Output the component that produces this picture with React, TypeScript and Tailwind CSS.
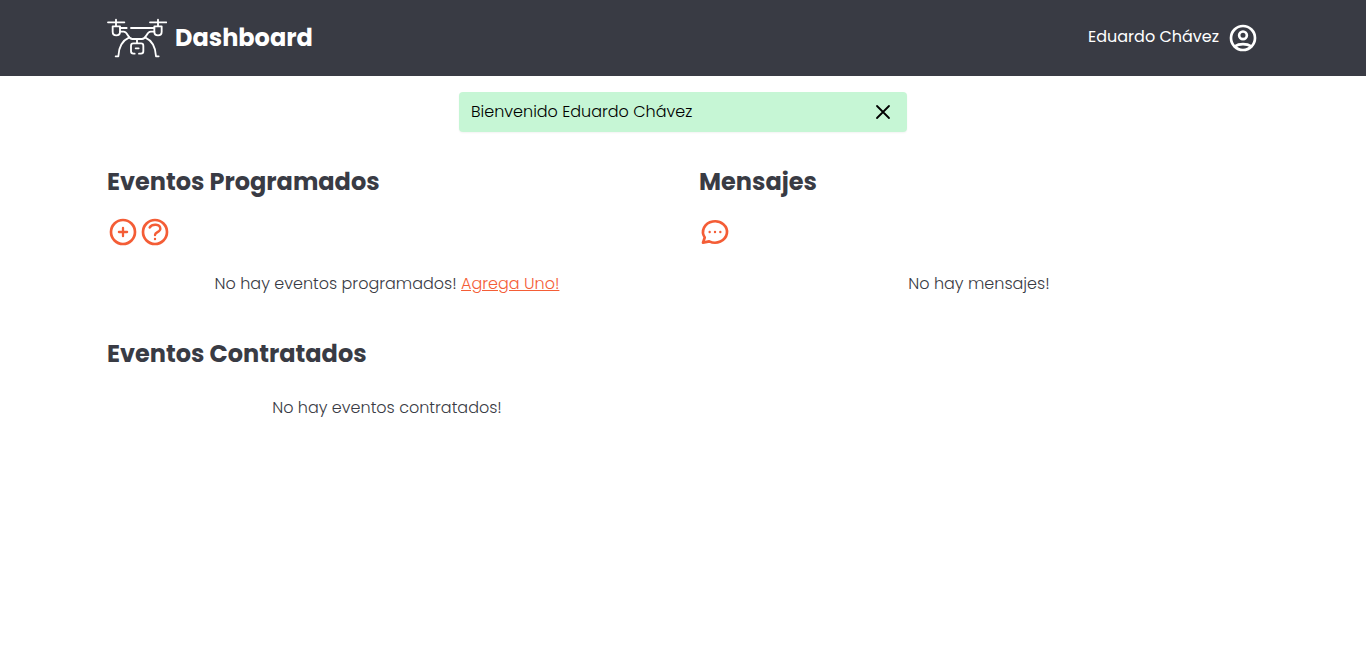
import { useState, type ReactNode } from 'react';

function Icon({ children }: { children: ReactNode }) {
  return (
    <svg
      viewBox="0 0 24 24"
      className="size-8"
      fill="none"
      stroke="currentColor"
      strokeWidth={2}
      strokeLinecap="round"
      strokeLinejoin="round"
      aria-hidden="true"
    >
      {children}
    </svg>
  );
}

function DroneLogo() {
  return (
    <svg
      viewBox="21 21 180 126"
      className="h-[42px] w-[60px]"
      fill="none"
      stroke="currentColor"
      strokeWidth={5.5}
      strokeLinecap="round"
      strokeLinejoin="round"
      aria-hidden="true"
    >
      <path d="M24 37H73M48 29V47M38 49H60V65Q60 76 49 76Q38 76 38 65Z" />
      <path d="M150 37H199M174 29V47M163 49H185V65Q185 76 174 76Q163 76 163 65Z" />
      <path d="M60 54H80M93 54H163" />
      <path d="M60 65H71C84 65 83 87 97 87H126C140 87 139 65 152 65H163" />
      <path d="M88 82C68 91 56 112 55 139H47M135 82C155 91 167 112 168 139H176" />
      <path d="M111 88V99M104 131H100Q93 131 93 124V107Q93 100 100 100H123Q130 100 130 107V124Q130 131 123 131H117M107 115H116" />
    </svg>
  );
}

export default function App() {
  const [showWelcome, setShowWelcome] = useState(true);

  return (
    <div className="min-h-screen bg-white font-['Poppins','Inter',sans-serif] text-base leading-6 font-light text-[#393b44]">
      <header className="bg-[#393b44] text-white">
        <div className="mx-auto flex h-[76px] max-w-6xl items-center justify-between">
          <a href="#inicio" className="flex items-center gap-2">
            <DroneLogo />
            <h1 className="text-2xl font-bold">Dashboard</h1>
          </a>
          <a href="#perfil" className="flex items-center gap-2 font-normal">
            <span className="pb-0.5">Eduardo Chávez</span>
            <Icon>
              <circle cx="12" cy="12" r="9" />
              <circle cx="12" cy="10" r="2.9" />
              <path d="M5.8 18.2Q8.4 16.6 12 16.6T18.2 18.2" />
            </Icon>
          </a>
        </div>
      </header>

      <main className="mx-auto max-w-6xl pt-4">
        {showWelcome && (
          <div
            role="status"
            className="mx-auto flex h-10 max-w-md items-center justify-between rounded bg-[#c6f6d5] px-3 text-black shadow-xs"
          >
            <p>Bienvenido Eduardo Chávez</p>
            <button
              type="button"
              aria-label="Cerrar"
              className="flex w-6 justify-center"
              onClick={() => setShowWelcome(false)}
            >
              <svg viewBox="0 0 24 24" className="size-6" fill="none" stroke="currentColor" strokeWidth={1.8} strokeLinecap="round">
                <path d="M18 6L6 18M6 6l12 12" />
              </svg>
            </button>
          </div>
        )}

        <div className="mt-8 grid grid-cols-2 gap-8">
          <div className="flex flex-col gap-10">
            <section>
              <h2 className="text-2xl leading-9 font-bold">Eventos Programados</h2>
              <div className="mt-4 flex text-[#f45d36]">
                <a href="#agregar" aria-label="Agregar evento">
                  <Icon>
                    <circle cx="12" cy="12" r="9" />
                    <path strokeWidth={1.7} d="M8.9 12h6.2M12 8.9v6.2" />
                  </Icon>
                </a>
                <a href="#ayuda" aria-label="Ayuda">
                  <Icon>
                    <circle cx="12" cy="12" r="9" />
                    <path strokeWidth={1.8} d="M8 8.6C9.2 6.8 11 6.5 12.6 6.6C14.6 6.8 16 7.9 16 9.6C16 12.2 12 12 12 14.2M12 17.2v.01" />
                  </Icon>
                </a>
              </div>
              <p className="mt-6 text-center">
                No hay eventos programados!{' '}
                <a href="#agregar" className="text-[#f45d36] underline">Agrega Uno!</a>
              </p>
            </section>
            <section>
              <h2 className="text-2xl leading-9 font-bold">Eventos Contratados</h2>
              <p className="mt-6 text-center">No hay eventos contratados!</p>
            </section>
          </div>
          <section>
            <h2 className="text-2xl leading-9 font-bold">Mensajes</h2>
            <a href="#mensajes" aria-label="Mensajes" className="mt-4 flex w-8 text-[#f45d36]">
              <Icon>
                <path d="M3 20l1.3-3.9a9 8 0 1 1 3.4 2.9L3 20" />
                <path strokeWidth={1.8} d="M12 12v.01M8 12v.01M16 12v.01" />
              </Icon>
            </a>
            <p className="mt-6 text-center">No hay mensajes!</p>
          </section>
        </div>
      </main>
    </div>
  );
}
